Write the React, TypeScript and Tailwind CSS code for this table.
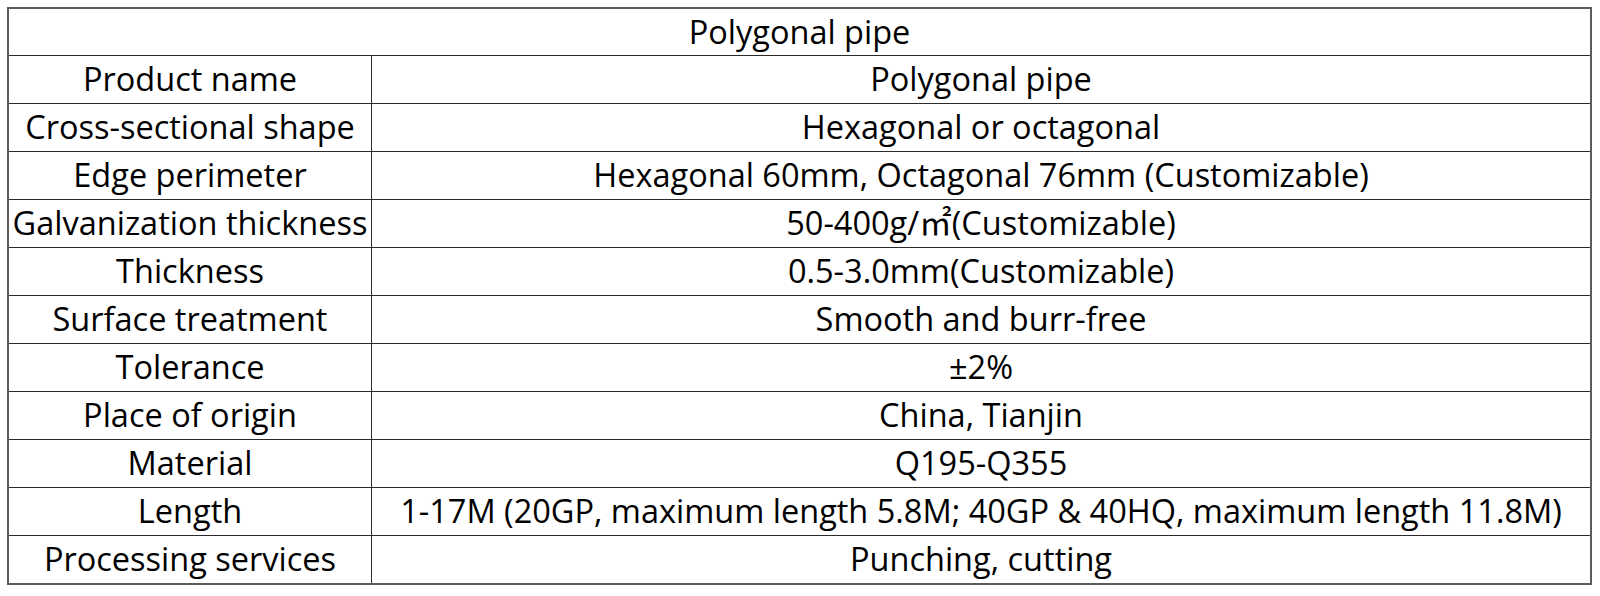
const ROWS: [string, string][] = [
  ["Product name", "Polygonal pipe"],
  ["Cross-sectional shape", "Hexagonal or octagonal"],
  ["Edge perimeter", "Hexagonal 60mm, Octagonal 76mm (Customizable)"],
  ["Galvanization thickness", "50-400g/㎡(Customizable)"],
  ["Thickness", "0.5-3.0mm(Customizable)"],
  ["Surface treatment", "Smooth and burr-free"],
  ["Tolerance", "±2%"],
  ["Place of origin", "China, Tianjin"],
  ["Material", "Q195-Q355"],
  ["Length", "1-17M (20GP, maximum length 5.8M; 40GP & 40HQ, maximum length 11.8M)"],
  ["Processing services", "Punching, cutting"],
];

export default function App() {
  return (
    <div
      className="w-[1600px] h-[596px] bg-white pt-[7px] pl-[7px] text-black"
      style={{ fontFamily: '"Open Sans", "Noto Sans", "Noto Sans CJK SC", sans-serif' }}
    >
      <div className="w-[1585px] border-2 border-[#5c5c5c]">
        <div className="h-[47px] flex items-center justify-center text-[32.5px] leading-none border-b border-[#2a2a2a]">
          Polygonal pipe
        </div>
        {ROWS.map(([label, value], i) => (
          <div
            key={i}
            className={`grid grid-cols-[363px_1fr] text-[32.5px] leading-none ${
              i < ROWS.length - 1 ? "h-[48px] border-b border-[#2a2a2a]" : "h-[47px]"
            }`}
          >
            <div className="flex items-center justify-center border-r border-[#2a2a2a] whitespace-nowrap">
              {label}
            </div>
            <div className="flex items-center justify-center whitespace-nowrap">{value}</div>
          </div>
        ))}
      </div>
    </div>
  );
}
